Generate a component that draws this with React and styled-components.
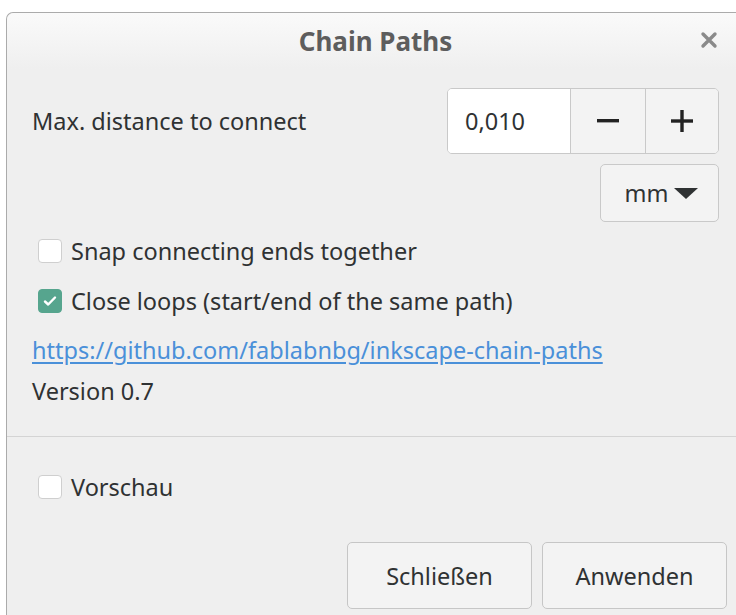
import React, { useState } from 'react';
import styled, { createGlobalStyle } from 'styled-components';

const GlobalStyle = createGlobalStyle`
  html, body {
    margin: 0;
    padding: 0;
    background: #ffffff;
    overflow: hidden;
  }

  body {
    font-family: 'Noto Sans', 'Open Sans', sans-serif;
    font-size: 23.5px;
    line-height: 32px;
    color: #2f3233;
  }
`;

const Desktop = styled.div`
  width: 736px;
  height: 615px;
  padding: 12px 0 0 6px;
  box-sizing: border-box;
  overflow: hidden;
`;

const Window = styled.div`
  width: 738px;
  height: 620px;
  box-sizing: border-box;
  border: 1px solid #ababab;
  border-right: none;
  border-bottom: none;
  border-radius: 7px 0 0 0;
  background: #efefef;
  display: flex;
  flex-direction: column;
`;

const TitleBar = styled.div`
  height: 56px;
  flex-shrink: 0;
  display: grid;
  grid-template-columns: 70px 1fr 70px;
  align-items: center;
  border-radius: 7px 0 0 0;
  background: linear-gradient(#fafafa, #efefef);
`;

const Title = styled.h1`
  grid-column: 2;
  margin: 0;
  text-align: center;
  font-size: 26px;
  font-weight: 700;
  color: #5d5d5d;
`;

const CloseButton = styled.button`
  justify-self: center;
  margin-top: -2px;
  padding: 0;
  border: none;
  background: none;
  display: flex;
  color: #8a8a8a;
`;

const Content = styled.div`
  display: flex;
  flex-direction: column;
  padding: 19px 25px 0;
`;

const Row = styled.div`
  display: flex;
  align-items: center;
  justify-content: space-between;
  height: 66px;
`;

const Label = styled.span``;

const SpinBox = styled.div`
  display: flex;
  height: 66px;
  box-sizing: border-box;
  border: 1px solid #c9c9c9;
  border-radius: 5px;
  overflow: hidden;
  background: #f3f3f3;
`;

const Entry = styled.div`
  width: 123px;
  padding-left: 17px;
  box-sizing: border-box;
  display: flex;
  align-items: center;
  background: #ffffff;
  border-right: 1px solid #c9c9c9;
`;

const StepButton = styled.button`
  width: ${({ $w }) => $w}px;
  border: none;
  border-left: ${({ $divider }) => ($divider ? '1px solid #c9c9c9' : 'none')};
  background: #f3f3f3;
  display: flex;
  align-items: center;
  justify-content: center;
  padding: 0;
  color: #222;
`;

const UnitRow = styled.div`
  display: flex;
  justify-content: flex-end;
  margin-top: 10px;
`;

const Dropdown = styled.button`
  width: 119px;
  height: 58px;
  box-sizing: border-box;
  border: 1px solid #c9c9c9;
  border-radius: 5px;
  background: #f3f3f3;
  display: flex;
  align-items: center;
  justify-content: center;
  gap: 6px;
  font: inherit;
  color: #2f3233;
  padding: 0 0 0 4px;
`;

const Triangle = styled.span`
  width: 0;
  height: 0;
  border-left: 12px solid transparent;
  border-right: 12px solid transparent;
  border-top: 11px solid #2f3233;
`;

const CheckRow = styled.label`
  display: flex;
  align-items: center;
  gap: 9px;
  padding-left: ${({ $indent }) => $indent}px;
  margin-top: ${({ $top }) => $top}px;
`;

const Box = styled.span`
  width: 24px;
  height: 24px;
  box-sizing: border-box;
  border-radius: 4px;
  display: flex;
  align-items: center;
  justify-content: center;
  background: ${({ $checked }) => ($checked ? '#56a58e' : '#ffffff')};
  border: 1px solid ${({ $checked }) => ($checked ? '#56a58e' : '#cfcfcf')};
`;

const Link = styled.a`
  margin-top: 17px;
  color: #4a90d9;
  text-decoration: underline;
  text-underline-offset: 3px;
  align-self: flex-start;
`;

const Version = styled.div`
  margin-top: 9px;
`;

const Separator = styled.hr`
  margin: 29px 0 0;
  border: none;
  border-top: 1px solid #d4d4d4;
`;

const Footer = styled.div`
  display: flex;
  flex-direction: column;
  padding: 0 17px 0 31px;
`;

const ButtonRow = styled.div`
  display: flex;
  justify-content: flex-end;
  gap: 10px;
  margin-top: 39px;
`;

const DialogButton = styled.button`
  width: 185px;
  height: 67px;
  box-sizing: border-box;
  border: 1px solid #c6c6c6;
  border-radius: 5px;
  background: #f3f3f3;
  font: inherit;
  color: #2f3233;
`;

const Check = ({ checked }) => (
  <Box $checked={checked}>
    {checked && (
      <svg width="16" height="16" viewBox="0 0 16 16">
        <path d="M3 8.5l3.2 3L13 4.5" fill="none" stroke="#fff" strokeWidth="2.4" strokeLinecap="round" strokeLinejoin="round" />
      </svg>
    )}
  </Box>
);

export default function App() {
  const [snap, setSnap] = useState(false);
  const [loops, setLoops] = useState(true);
  const [preview, setPreview] = useState(false);

  return (
    <>
      <GlobalStyle />
      <Desktop>
        <Window>
          <TitleBar>
            <Title>Chain Paths</Title>
            <CloseButton aria-label="close">
              <svg width="18" height="18" viewBox="0 0 18 18">
                <path d="M3 3l12 12M15 3L3 15" stroke="currentColor" strokeWidth="3.4" strokeLinecap="round" />
              </svg>
            </CloseButton>
          </TitleBar>

          <Content>
            <Row>
              <Label>Max. distance to connect</Label>
              <SpinBox>
                <Entry>0,010</Entry>
                <StepButton $w={74} $divider={false}>
                  <svg width="22" height="4" viewBox="0 0 22 4"><rect width="22" height="3.4" fill="currentColor" /></svg>
                </StepButton>
                <StepButton $w={73} $divider>
                  <svg width="22" height="22" viewBox="0 0 22 22">
                    <rect x="0" y="9.3" width="22" height="3.4" fill="currentColor" />
                    <rect x="9.3" y="0" width="3.4" height="22" fill="currentColor" />
                  </svg>
                </StepButton>
              </SpinBox>
            </Row>
            <UnitRow>
              <Dropdown>
                mm
                <Triangle />
              </Dropdown>
            </UnitRow>

            <CheckRow $indent={6} $top={13} onClick={() => setSnap(!snap)}>
              <Check checked={snap} />
              Snap connecting ends together
            </CheckRow>
            <CheckRow $indent={6} $top={18} onClick={() => setLoops(!loops)}>
              <Check checked={loops} />
              Close loops (start/end of the same path)
            </CheckRow>

            <Link href="#">https://github.com/fablabnbg/inkscape-chain-paths</Link>
            <Version>Version 0.7</Version>
          </Content>

          <Separator />

          <Footer>
            <CheckRow $indent={0} $top={34} onClick={() => setPreview(!preview)}>
              <Check checked={preview} />
              Vorschau
            </CheckRow>
            <ButtonRow>
              <DialogButton>Schließen</DialogButton>
              <DialogButton>Anwenden</DialogButton>
            </ButtonRow>
          </Footer>
        </Window>
      </Desktop>
    </>
  );
}
